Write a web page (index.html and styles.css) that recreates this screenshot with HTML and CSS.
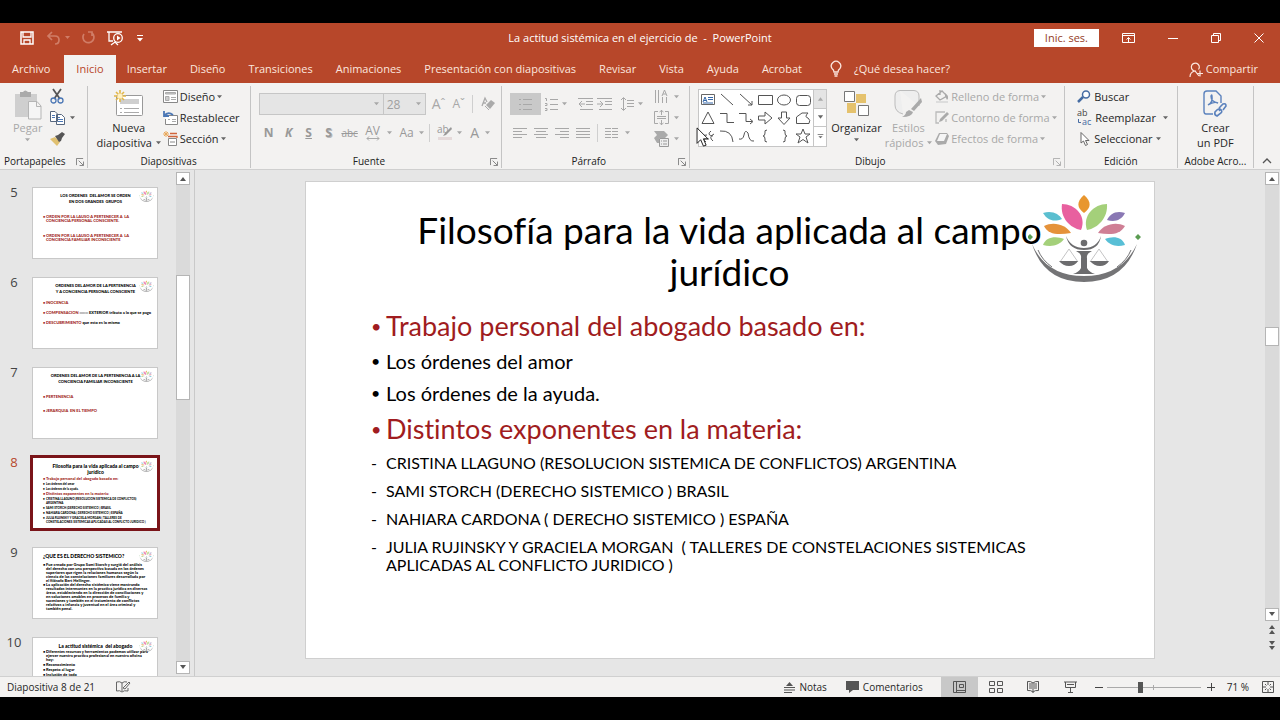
FILE: index.html
```html
<!DOCTYPE html>
<html lang="es">
<head>
<meta charset="utf-8">
<title>La actitud sistémica en el ejercicio de - PowerPoint</title>
<link rel="stylesheet" href="styles.css">
</head>
<body>
<svg class="defs" aria-hidden="true">
  <symbol id="logo" viewBox="0 0 114 92">
    <path fill="#e8962e" d="M56 3C64 10 63 16 56 21C49 16 48 10 56 3Z"/>
    <path fill="#e8609f" d="M34 12C47 12 59 24 53 38C42 36 32 26 34 12Z"/>
    <path fill="#a4d07a" d="M79 12C66 12 54 24 59 38C70 36 80 26 79 12Z"/>
    <path fill="#5bbfd0" d="M15 21C24 18 31 22 34 27C26 30 20 29 15 21Z"/>
    <path fill="#8a78b4" d="M97 21C88 18 82 22 79 28C86 30 93 29 97 21Z"/>
    <path fill="#e5923a" d="M16 34C26 29 38 33 43 41C31 43 20 43 16 34Z"/>
    <path fill="#cf7f95" d="M97 34C87 29 75 33 70 41C82 43 92 43 97 34Z"/>
    <path fill="#a4d07a" d="M15 53C18 44 29 44 36 47C31 54 23 55 15 53Z"/>
    <path fill="#58bfd6" d="M97 53C94 44 84 44 77 47C82 54 89 55 97 53Z"/>
    <circle fill="#6c6c6e" cx="56" cy="51" r="3.3"/>
    <path fill="#6c6c6e" d="M38 44Q43 56 56 56T73 44Q71 58 56 58Q41 58 38 44Z"/>
    <path fill="#6c6c6e" d="M48 59H64Q58 62 59 66V76Q61 80 67 82H45Q51 80 53 76V66Q54 62 48 59Z"/>
    <path fill="none" stroke="#c4c4c5" d="M32 70L41 57L50 70M62 70L71 57L80 70"/>
    <path fill="#6c6c6e" d="M31 69H50Q47 74 41 74T31 69ZM62 69H81Q78 74 72 74T62 69Z"/>
    <path fill="#747476" d="M4 52Q18 84 56 84T109 52Q96 90 56 90T4 52Z"/>
    <path fill="none" stroke="#747476" d="M10 58Q14 68 24 75M103 58Q99 68 89 75"/>
    <path fill="#5a9c52" d="M2 42L5 45L2 48L-1 45ZM110 42L113 45L110 48L107 45Z"/>
  </symbol>
  <symbol id="caret" viewBox="0 0 6 4"><path fill="currentColor" d="M0 0H6L3 3.5Z"/></symbol>
  <symbol id="launch" viewBox="0 0 9 9"><path fill="none" stroke="currentColor" d="M.5 8V.5H8M3 3L8 8M8.500 4V8.500H4"/></symbol>
  <symbol id="up" viewBox="0 0 8 5"><path fill="currentColor" d="M1 5L4 1L7 5Z"/></symbol>
  <symbol id="down" viewBox="0 0 8 5"><path fill="currentColor" d="M1 0L4 4L7 0Z"/></symbol>
</svg>
<div class="screen">
<header class="titlebar">
  <div class="quick">
    <button aria-label="Guardar"><svg width="14" height="14" viewBox="0 0 14 14"><path fill="none" stroke="#fff" stroke-width="1.500" d="M1 1H13V13H1Z"/><path fill="none" stroke="#fff" stroke-width="1.300" d="M3 1V6H11V1M4 13V9H10V13"/></svg></button>
    <button class="faded" aria-label="Deshacer"><svg width="23" height="14" viewBox="0 0 23 14"><path fill="none" stroke="currentColor" stroke-width="1.700" d="M5 1L1 5L5 9M1 5H8Q12 5 12 9T8 13"/><path fill="currentColor" d="M18 5H23L20.500 8Z"/></svg></button>
    <button class="faded" aria-label="Repetir"><svg width="14" height="14" viewBox="0 0 14 14"><path fill="none" stroke="currentColor" stroke-width="1.700" d="M8 1H12V5M12 2A5.500 5.500 0 1 1 4 3"/></svg></button>
    <button aria-label="Presentación desde el principio"><svg width="17" height="15" viewBox="0 0 17 15"><path fill="none" stroke="#fff" stroke-width="1.300" d="M0 1H15M2 1V10H6M4 14L8 11L11 14"/><circle cx="11" cy="7" r="4.300" fill="#b7472a" stroke="#fff" stroke-width="1.300"/><path fill="#fff" d="M10 4.500V9.500L13.500 7Z"/></svg></button>
    <button aria-label="Personalizar"><svg width="6" height="7" viewBox="0 0 6 7"><path fill="#fff" d="M0 0H6V1H0ZM0 3H6L3 6.500Z"/></svg></button>
  </div>
  <h1>La actitud sistémica en el ejercicio de&nbsp; -&nbsp; PowerPoint</h1>
  <div class="window">
    <button class="signin">Inic. ses.</button>
    <button aria-label="Opciones de la cinta"><svg width="13" height="10" viewBox="0 0 13 10"><path fill="none" stroke="#fff" d="M.5.5H12.500V9.500H.5ZM.5 2.500H12.500M6.500 9V4.500M4.500 6.500L6.500 4.500L8.500 6.500"/></svg></button>
    <button aria-label="Minimizar"><svg width="10" height="10" viewBox="0 0 10 10"><path stroke="#fff" d="M0 5.500H10"/></svg></button>
    <button aria-label="Restaurar"><svg width="10" height="10" viewBox="0 0 10 10"><path fill="none" stroke="#fff" d="M.5 2.500H7.500V9.500H.5ZM2.500 2V.5H9.500V7.500H8"/></svg></button>
    <button aria-label="Cerrar"><svg width="10" height="10" viewBox="0 0 10 10"><path stroke="#fff" d="M.5.5L9.500 9.500M9.500.5L.5 9.500"/></svg></button>
  </div>
</header>
<nav class="tabs">
  <button>Archivo</button><button class="active">Inicio</button><button>Insertar</button><button>Diseño</button><button>Transiciones</button><button>Animaciones</button><button>Presentación con diapositivas</button><button>Revisar</button><button>Vista</button><button>Ayuda</button><button>Acrobat</button>
  <button class="tell"><svg width="12" height="16" viewBox="0 0 12 16"><path fill="none" stroke="currentColor" stroke-width="1.300" d="M4 11Q4 9 2 7.500A4.700 4.700 0 1 1 10 7.500Q8 9 8 11ZM4 13H8M4.500 15H7.500"/></svg>¿Qué desea hacer?</button>
  <button class="share"><svg width="14" height="15" viewBox="0 0 14 15"><path fill="none" stroke="currentColor" stroke-width="1.200" d="M7 9A4 4 0 1 1 9.500 7.500M1 15Q1 10 6 9L10 14M8 11.500H14M11 8.500V14.500"/></svg>Compartir</button>
</nav>

<section class="ribbon">
  <div class="group g-clip">
    <div class="body">
      <button class="big off paste"><svg width="28" height="30" viewBox="0 0 28 30"><path fill="#cfcfcf" d="M1 4H23V27H1Z"/><path fill="#aaa" d="M6 2H9Q11-1 14 2H17V7H6Z"/><path fill="#f5f5f5" stroke="#b5b5b5" d="M14.500 11.500H23L27 16V29H14.500ZM22.500 12V16.500H27"/></svg>Pegar<svg class="caret"><use href="#caret"/></svg></button>
      <div class="stack">
        <button aria-label="Cortar"><svg width="14" height="15" viewBox="0 0 14 15"><path stroke="#555" stroke-width="1.800" d="M3 0L10 10M11 0L4 10"/><g fill="none" stroke="#4b77b5" stroke-width="1.300"><circle cx="3.500" cy="11.500" r="2.500"/><circle cx="10.500" cy="11.500" r="2.500"/></g></svg></button>
        <button aria-label="Copiar"><svg width="15" height="14" viewBox="0 0 15 14"><path fill="#fff" stroke="#56677f" d="M.5.5H5L7.500 3V10.500H.5ZM6.500 3.500H11.500L14.500 6.500V13.500H6.500Z"/><path stroke="#4b77b5" d="M2 4.500H5M2 6.500H5M8 8.500H13M8 10.500H13M8 6.500H10"/></svg><svg class="caret"><use href="#caret"/></svg></button>
        <button aria-label="Copiar formato"><svg width="15" height="14" viewBox="0 0 15 14"><path fill="#e0c070" d="M0 7L5 5L10 10L7 14Z"/><path fill="#555" d="M5 4L8 3L12 0L15 2L12 6L11 9L9 10Z"/></svg></button>
      </div>
    </div>
    <footer>Portapapeles<svg class="launch"><use href="#launch"/></svg></footer>
  </div>
  <div class="group g-slides">
    <div class="body">
      <button class="big"><svg width="29" height="27" viewBox="0 0 29 27"><rect x="2.500" y="5.500" width="26" height="20" rx="1" fill="#fff" stroke="#999"/><path fill="#cfcfcf" d="M6 9H25V14H6Z"/><path stroke="#aaa" d="M6 18.500H8M10 18.500H25M6 22.500H8M10 22.500H25"/><path stroke="#e2b748" stroke-width="1.600" d="M6 0V12M0 6H12M2 2L10 10M10 2L2 10"/><circle cx="6" cy="6" r="2.500" fill="#fff1c4"/></svg>Nueva<span>diapositiva <svg class="caret"><use href="#caret"/></svg></span></button>
      <div class="stack">
        <button><svg width="15" height="14" viewBox="0 0 15 14"><path fill="#fff" stroke="#888" d="M.5.5H14.500V12.500H.5Z"/><path fill="#ccc" stroke="#aaa" d="M2.500 2.500H12.500V4H2.500ZM2.500 6.500H6V10.500H2.500Z"/><path stroke="#aaa" d="M8 7.500H13M8 9.500H13"/></svg>Diseño<svg class="caret"><use href="#caret"/></svg></button>
        <button><svg width="15" height="14" viewBox="0 0 15 14"><path fill="#fff" stroke="#888" d="M3 4.500H14.500V13.500H2.500V8"/><path fill="none" stroke="#4b77b5" stroke-width="1.800" d="M1 0V5H6M1 5Q5 0 10 4"/><path stroke="#aaa" d="M5 8.500H7M9 8.500H13M9 10.500H13"/></svg>Restablecer</button>
        <button><svg width="15" height="15" viewBox="0 0 15 15"><path stroke="#e9a85a" d="M3 0V6M0 3H6M1 1L5 5M5 1L1 5"/><path fill="none" stroke="#d0643b" stroke-width="1.300" d="M7 2.500H14M5 5.500H14V7"/><path fill="#fff" stroke="#888" d="M5.500 7.500H13.500V14.500H5.500ZM7 11H12"/></svg>Sección<svg class="caret"><use href="#caret"/></svg></button>
      </div>
    </div>
    <footer>Diapositivas</footer>
  </div>
  <div class="group g-font off">
    <div class="body rows">
      <div class="line">
        <label class="combo wide"><select aria-label="Fuente" disabled><option></option></select><svg class="caret"><use href="#caret"/></svg></label><label class="combo"><select aria-label="Tamaño de fuente" disabled><option>28</option></select><svg class="caret"><use href="#caret"/></svg></label>
        <button class="tool grow">A<sup>ˆ</sup></button><button class="tool shrink">A<sup>ˇ</sup></button><i class="bar"></i>
        <button class="tool" aria-label="Borrar formato"><svg width="14" height="14" viewBox="0 0 14 14"><path fill="none" stroke="#aaa" stroke-width="1.300" d="M1 9L4 1L6 5M2 6H5"/><path fill="#aaa" d="M5 8L10 3L14 6L9 12Z"/><path stroke="#aaa" fill="none" d="M4 9L8 13"/></svg></button>
      </div>
      <div class="line font-tools">
        <button class="tool"><b>N</b></button><button class="tool"><b><em>K</em></b></button><button class="tool"><b><u>S</u></b></button><button class="tool shadow"><b>S</b></button><button class="tool abc"><s>abc</s></button>
        <button class="tool av"><span>AV</span><svg width="14" height="5" viewBox="0 0 14 5"><path fill="none" stroke="#aaa" d="M1 2.500H13M3 .5L1 2.500L3 4.500M11 .5L13 2.500L11 4.500"/></svg></button><svg class="caret"><use href="#caret"/></svg>
        <button class="tool">Aa</button><svg class="caret"><use href="#caret"/></svg><i class="bar"></i>
        <button class="tool" aria-label="Resaltado"><svg width="16" height="16" viewBox="0 0 16 16"><text x="0" y="8" font-size="10" fill="#999">ab</text><path fill="#999" d="M14 2L15 4L9 10L6 11L8 8Z"/><path fill="#e5dada" d="M1 12H15V15H1Z"/></svg></button><svg class="caret"><use href="#caret"/></svg>
        <button class="tool big-a">A</button><svg class="caret"><use href="#caret"/></svg>
      </div>
    </div>
    <footer>Fuente<svg class="launch"><use href="#launch"/></svg></footer>
  </div>
  <div class="group g-para off">
    <div class="body">
      <div class="rows">
        <div class="line">
          <button class="tool pressed" aria-label="Viñetas"><svg width="13" height="13" viewBox="0 0 13 13"><path stroke="currentColor" d="M0 1.500H2M4 1.500H13M0 6.500H2M4 6.500H13M0 11.500H2M4 11.500H13"/></svg></button>
          <button class="tool" aria-label="Numeración"><svg width="13" height="14" viewBox="0 0 13 14"><path fill="none" stroke="currentColor" d="M0 1.500H1.500V4M0 6.500H2V8.500H0M0 11.500H2V13.500H0M5 2.500H13M5 7.500H13M5 12.500H13"/></svg></button><svg class="caret"><use href="#caret"/></svg>
          <button class="tool gap-left" aria-label="Reducir sangría"><svg width="15" height="12" viewBox="0 0 15 12"><path fill="none" stroke="currentColor" d="M0 .5H15M8 3.500H15M8 6.500H15M2 11.500H15M1 6H7M4 3L1 6L4 9"/></svg></button>
          <button class="tool" aria-label="Aumentar sangría"><svg width="15" height="12" viewBox="0 0 15 12"><path fill="none" stroke="currentColor" d="M0 .5H15M8 3.500H15M8 6.500H15M2 11.500H15M0 6H6M3 3L6 6L3 9"/></svg></button>
          <button class="tool gap-left" aria-label="Interlineado"><svg width="13" height="14" viewBox="0 0 13 14"><path fill="none" stroke="currentColor" d="M2.500 1V13M0 3L2.500 .5L5 3M0 11L2.500 13.500L5 11M6 3.500H13M6 6.500H13M6 9.500H13"/></svg></button><svg class="caret"><use href="#caret"/></svg>
        </div>
        <div class="line align">
          <button class="tool" aria-label="Alinear a la izquierda"><svg width="14" height="10" viewBox="0 0 14 10"><path stroke="currentColor" d="M0 .5H14M0 3.500H9M0 6.500H14M0 9.500H9"/></svg></button>
          <button class="tool" aria-label="Centrar"><svg width="14" height="10" viewBox="0 0 14 10"><path stroke="currentColor" d="M0 .5H14M2 3.500H12M0 6.500H14M2 9.500H12"/></svg></button>
          <button class="tool" aria-label="Alinear a la derecha"><svg width="14" height="10" viewBox="0 0 14 10"><path stroke="currentColor" d="M0 .5H14M5 3.500H14M0 6.500H14M5 9.500H14"/></svg></button>
          <button class="tool" aria-label="Justificar"><svg width="14" height="10" viewBox="0 0 14 10"><path stroke="currentColor" d="M0 .5H14M0 3.500H14M0 6.500H14M0 9.500H14"/></svg></button><i class="bar"></i>
          <button class="tool" aria-label="Columnas"><svg width="13" height="10" viewBox="0 0 13 10"><path stroke="currentColor" d="M0 .5H6M7 .5H13M0 3.500H6M7 3.500H13M0 6.500H6M7 6.500H13M0 9.500H6M7 9.500H13"/></svg></button><svg class="caret"><use href="#caret"/></svg>
        </div>
      </div>
      <div class="stack">
        <button aria-label="Dirección del texto"><svg width="15" height="15" viewBox="0 0 15 15"><path fill="none" stroke="currentColor" d="M1.500 1V14M4.500 1V14M8.500 8V14M12.500 8V14M8 7L10.500 1L13 7M9 5H12"/></svg><svg class="caret"><use href="#caret"/></svg></button>
        <button aria-label="Alinear texto"><svg width="15" height="15" viewBox="0 0 15 15"><path fill="none" stroke="currentColor" d="M4 1.500H.5V13.500H4M11 1.500H14.500V13.500H11M3 6.500H12M3 8.500H12M7.500 0V5M5.500 2L7.500 .5L9.500 2M7.500 10V15M5.500 13L7.500 14.500L9.500 13"/></svg><svg class="caret"><use href="#caret"/></svg></button>
        <button aria-label="SmartArt"><svg width="15" height="16" viewBox="0 0 15 16"><path fill="#aaa" d="M0 0H10L14 4L11 7H5V12H3L0 7L3 4Z"/><path fill="#eee" stroke="#999" d="M5.500 7.500H14.500V15.500H5.500ZM7 10H8M9 10H13M7 13H8M9 13H13"/></svg><svg class="caret"><use href="#caret"/></svg></button>
      </div>
    </div>
    <footer>Párrafo<svg class="launch"><use href="#launch"/></svg></footer>
  </div>
  <div class="group g-draw">
    <div class="body">
      <div class="gallery">
        <div class="shapes">
          <svg viewBox="0 0 18 18"><path fill="#fff" stroke="#666" d="M2.500 3.500H15.500V13.500H2.500Z"/><path fill="none" stroke="#3467a8" d="M4 11L6 6L8 11M5 9.500H7M9 6.500H14M9 8.500H14M4 12H14"/></svg>
          <svg viewBox="0 0 18 18"><path d="M3 3L15 14"/></svg>
          <svg viewBox="0 0 18 18"><path d="M3 3L15 14M15 10V14H11"/></svg>
          <svg viewBox="0 0 18 18"><path d="M2.500 4.500H16.500V13.500H2.500Z"/></svg>
          <svg viewBox="0 0 18 18"><ellipse cx="9" cy="9" rx="6.500" ry="5"/></svg>
          <svg viewBox="0 0 18 18"><rect x="2.500" y="4.500" width="14" height="10" rx="3"/></svg>
          <svg viewBox="0 0 18 18"><path d="M9 3L15 14.500H3Z"/></svg>
          <svg viewBox="0 0 18 18"><path d="M2 4.500H9V13.500H16"/></svg>
          <svg viewBox="0 0 18 18"><path d="M2 4.500H9V12.500H15M13 10L16 12.500L13 15"/></svg>
          <svg viewBox="0 0 18 18"><path d="M2.500 7H9V3L16 9L9 15V11H2.500Z"/></svg>
          <svg viewBox="0 0 18 18"><path d="M6.500 3H11.500V9H15L9 15.500L3 9H6.500Z"/></svg>
          <svg viewBox="0 0 18 18"><path d="M2.500 14.500V8L8 4H14Q10 8 14 9Q17 11 15 14.500Z"/></svg>
          <svg viewBox="0 0 18 18"><path d="M4 13Q1 8 8 8M7 15Q2 11 10 12M12 4Q7 8 14 9M15 7Q9 10 14 14"/></svg>
          <svg viewBox="0 0 18 18"><path d="M2 4Q14 3 15 15"/></svg>
          <svg viewBox="0 0 18 18"><path d="M2 12Q6 13 7 8Q8 2 11 6Q12 15 17 14"/></svg>
          <svg viewBox="0 0 18 18"><path d="M11 3Q8 3 9 6Q9 9 7 9Q9 9 9 12Q8 15 11 15"/></svg>
          <svg viewBox="0 0 18 18"><path d="M8 3Q11 3 10 6Q10 9 12 9Q10 9 10 12Q11 15 8 15"/></svg>
          <svg viewBox="0 0 18 18"><path d="M9 2L11 7H16L12 10L14 16L9 12.500L4 16L6 10L2 7H7Z"/></svg>
        </div>
        <div class="scroll3"><button class="dim" aria-label="Arriba"><svg><use href="#up"/></svg></button><button aria-label="Abajo"><svg><use href="#down"/></svg></button><button aria-label="Más formas"><svg viewBox="0 0 8 7"><path fill="currentColor" d="M0 0H8V1H0ZM1 3H7L4 6Z"/></svg></button></div>
        <svg class="cursor" viewBox="0 0 14 22"><path fill="#fff" stroke="#111" d="M1 1V18L5 14L8 21L11 20L8 13H13Z"/></svg>
      </div>
      <button class="big"><svg width="27" height="27" viewBox="0 0 27 27"><path fill="#e5c26d" d="M13 4H23V13H13V23H4V13H13Z"/><path fill="#fff" stroke="#777" d="M1.500 1.500H11.500V11.500H1.500ZM15.500 15.500H25.500V25.500H15.500Z"/></svg>Organizar<svg class="caret"><use href="#caret"/></svg></button>
      <button class="big off"><svg width="28" height="27" viewBox="0 0 28 27"><path fill="#eee" stroke="#bbb" d="M6 .5H20Q25 1 25 6V16M9 24Q1 22 1 15V6Q1 1 6 .5"/><path fill="#aaa" d="M27 8L28 12L20 21L17 19ZM15 20L19 22Q18 27 8 27Q12 25 12 22Z"/></svg>Estilos<span>rápidos <svg class="caret"><use href="#caret"/></svg></span></button>
      <div class="stack off">
        <button><svg width="14" height="15" viewBox="0 0 14 15"><path fill="none" stroke="#aaa" stroke-width="1.300" d="M1 7L7 2L12 7L5 11ZM5 6V1"/><path fill="#aaa" d="M10 4Q15 8 12 11L10 7Z"/><path fill="#ddd" d="M1 12H13V14H1Z"/></svg>Relleno de forma<svg class="caret"><use href="#caret"/></svg></button>
        <button><svg width="14" height="14" viewBox="0 0 14 14"><path fill="none" stroke="#bbb" stroke-width="1.300" d="M10 1H1V12H4M11 8V11"/><path fill="#aaa" d="M12 1L14 3L7 10L4 11L5 8Z"/></svg>Contorno de forma<svg class="caret"><use href="#caret"/></svg></button>
        <button><svg width="14" height="14" viewBox="0 0 14 14"><path fill="#aaa" d="M4 1H12L14 4L11 12L3 13L0 9Z"/><path fill="#f5f5f5" d="M5 2H12L9 9H2Z"/></svg>Efectos de forma<svg class="caret"><use href="#caret"/></svg></button>
      </div>
    </div>
    <footer>Dibujo<svg class="launch off"><use href="#launch"/></svg></footer>
  </div>
  <div class="group g-edit">
    <div class="body"><div class="stack">
      <button><svg width="14" height="13" viewBox="0 0 14 13"><circle cx="9" cy="4.500" r="3.500" fill="#fff" stroke="#466ca3" stroke-width="1.500"/><path stroke="#466ca3" stroke-width="2.500" d="M6 7L1 12"/></svg>Buscar</button>
      <button><svg width="15" height="16" viewBox="0 0 15 16"><text x="0" y="6" font-size="9" fill="#444">ab</text><text x="5" y="15" font-size="9" fill="#466ca3">ac</text><path fill="none" stroke="#466ca3" d="M1.500 9V12.500H4"/></svg>Reemplazar<svg class="caret far"><use href="#caret"/></svg></button>
      <button><svg width="14" height="14" viewBox="0 0 14 14"><path fill="#fff" stroke="#666" d="M4 .5V11L6.500 9L8.500 13.500L10.500 12.500L8.500 8.500H12Z"/></svg>Seleccionar<svg class="caret"><use href="#caret"/></svg></button>
    </div></div>
    <footer>Edición</footer>
  </div>
  <div class="group g-pdf">
    <div class="body"><button class="big"><svg width="24" height="27" viewBox="0 0 24 27"><path fill="none" stroke="#5b82bd" stroke-width="1.400" d="M10 24H3Q1 24 1 21V4Q1 1 4 1H13L18 6V13M5 15Q10 13 9 6Q9 4 8 6Q8 12 15 13Q11 11 5 15"/><path fill="none" stroke="#5b82bd" stroke-width="1.600" d="M15 19L12 22Q11 25 14 26L18 23Q20 21 17 19M17 21Q15 19 17 17L20 14Q23 13 23 16L20 20"/></svg>Crear<span>un PDF</span></button></div>
    <footer>Adobe Acro...</footer>
  </div>
  <button class="collapse" aria-label="Contraer la cinta"><svg width="10" height="6" viewBox="0 0 10 6"><path fill="none" stroke="#555" stroke-width="1.300" d="M1 5L5 1L9 5"/></svg></button>
</section>

<main class="work">
  <aside class="pane">
    <ol class="thumbs">
      <li><span>5</span><div class="thumb t5"><h3>LOS ORDENES&nbsp; DEL AMOR SE ORDEN<br>EN DOS GRANDES&nbsp; GRUPOS</h3><ul><li>ORDEN POR LA LAUSO A PERTENECER A&nbsp; LA CONCIENCIA PERSONAL CONSCIENTE.</li><li>ORDEN POR LA LAUSO A PERTENECER A&nbsp; LA CONCIENCIA FAMILIAR INCONSCIENTE</li></ul><svg><use href="#logo"/></svg></div></li>
      <li><span>6</span><div class="thumb t6"><h3>ORDENES DEL AMOR DE LA PERTENENCIA<br>Y A CONCIENCIA PERSONAL CONSCIENTE</h3><ul><li>INOCENCIA</li><li>COMPENSACION <b>═══ EXTERIOR tributo a lo que se pago</b></li><li>DESCUBRIMIENTO <b>que esto es lo mismo</b></li></ul><svg><use href="#logo"/></svg></div></li>
      <li><span>7</span><div class="thumb t7"><h3>ORDENES DEL AMOR DE LA PERTENENCIA A LA<br>CONCIENCIA FAMILIAR INCONSCIENTE</h3><ul><li>PERTENENCIA</li><li>JERARQUIA&nbsp; EN EL TIEMPO</li></ul><svg><use href="#logo"/></svg></div></li>
      <li class="current"><span>8</span><div class="thumb t8"><h3>Filosofía para la vida aplicada al campo<br>jurídico</h3><ul><li>Trabajo personal del abogado basado en:</li><li class="k">Los órdenes del amor</li><li class="k">Los órdenes de la ayuda.</li><li>Distintos exponentes en la materia:</li><li class="k">CRISTINA LLAGUNO (RESOLUCION SISTEMICA DE CONFLICTOS) ARGENTINA</li><li class="k">SAMI STORCH (DERECHO SISTEMICO ) BRASIL</li><li class="k">NAHIARA CARDONA ( DERECHO SISTEMICO ) ESPAÑA</li><li class="k">JULIA RUJINSKY Y GRACIELA MORGAN ( TALLERES DE CONSTELACIONES SISTEMICAS APLICADAS AL CONFLICTO JURIDICO )</li></ul><svg><use href="#logo"/></svg></div></li>
      <li><span>9</span><div class="thumb t9"><h3>¿QUE ES EL DERECHO SISTEMICO?</h3><ul><li class="k">Fue creado por Grupo Sami Storch y surgió del análisis del derecho con una perspectiva basada en los órdenes superiores que rigen la relaciones humanas según la ciencia de las constelaciones familiares desarrollada por el filósofo Bert Hellinger.</li><li class="k">La aplicación del derecho sistémico viene mostrando resultados interesantes en la practica jurídica en diversas áreas, estableciendo en la dirección de conciliaciones y en soluciones amables en procesos de familia y sucesiones y también en el tratamiento de conflictos relativos a infancia y juventud en el área criminal y también penal.</li></ul><svg><use href="#logo"/></svg></div></li>
      <li><span>10</span><div class="thumb t10"><h3>La actitud sistémica&nbsp; del abogado</h3><ul><li class="k">Diferentes recursos y herramientas podemos utilizar para ejercer nuestra practica profesional en nuestra oficina hoy:</li><li class="k">Reconocimiento</li><li class="k">Respeto al lugar</li><li class="k">Inclusión de todo</li></ul><svg><use href="#logo"/></svg></div></li>
    </ol>
    <div class="scrollbar left"><button aria-label="Subir"><svg><use href="#up"/></svg></button><div class="track"><div class="handle"></div></div><button aria-label="Bajar"><svg><use href="#down"/></svg></button></div>
  </aside>
  <section class="editor">
    <article class="slide">
      <h2>Filosofía para la vida aplicada al campo jurídico</h2>
      <ul>
        <li class="red">Trabajo personal del abogado basado en:</li>
        <li class="mid">Los órdenes del amor</li>
        <li class="mid">Los órdenes de la ayuda.</li>
        <li class="red">Distintos exponentes en la materia:</li>
        <li class="dash">CRISTINA LLAGUNO (RESOLUCION SISTEMICA DE CONFLICTOS) ARGENTINA</li>
        <li class="dash">SAMI STORCH (DERECHO SISTEMICO ) BRASIL</li>
        <li class="dash">NAHIARA CARDONA ( DERECHO SISTEMICO ) ESPAÑA</li>
        <li class="dash">JULIA RUJINSKY Y GRACIELA MORGAN&nbsp; ( TALLERES DE CONSTELACIONES SISTEMICAS APLICADAS AL CONFLICTO JURIDICO )</li>
      </ul>
      <svg class="brand"><use href="#logo"/></svg>
    </article>
  </section>
  <div class="scrollbar right"><button aria-label="Subir"><svg><use href="#up"/></svg></button><div class="track"><div class="handle"></div></div><button aria-label="Bajar"><svg><use href="#down"/></svg></button>
    <button class="jump" aria-label="Diapositiva anterior"><svg viewBox="0 0 8 9"><path fill="currentColor" d="M1 4L4 0L7 4ZM1 9L4 5L7 9Z"/></svg></button><button class="jump" aria-label="Diapositiva siguiente"><svg viewBox="0 0 8 9"><path fill="currentColor" d="M1 0L4 4L7 0ZM1 5L4 9L7 5Z"/></svg></button></div>
</main>

<footer class="status">
  <span>Diapositiva 8 de 21</span>
  <button class="spell" aria-label="Ortografía"><svg width="15" height="12" viewBox="0 0 15 12"><path fill="none" stroke="#666" d="M6 10V2Q4 0 .5 1V10Q4 9 6 11Q8 9 12 10V7M6 2Q8 0 11 1M7 7L13 1L14 2L9 8Z"/></svg></button>
  <div class="status-right">
    <button><svg width="11" height="11" viewBox="0 0 11 11"><path fill="#555" d="M2 4L5.500 0L9 4ZM0 5H11V6H0ZM0 7.500H11V8.500H0ZM0 10H8V11H0Z"/></svg>Notas</button>
    <button class="comments"><svg width="13" height="12" viewBox="0 0 13 12"><path fill="#555" d="M0 0H13V9H7L3 12V9H0Z"/></svg>Comentarios</button>
    <button class="view on" aria-label="Normal"><svg width="13" height="12" viewBox="0 0 13 12"><path fill="none" stroke="#555" d="M.5.5H12.500V11.500H.5ZM3.500.5V11.500M6.500 3.500H10.500V6.500H6.500ZM3.500 9.500H12.500"/></svg></button>
    <button class="view" aria-label="Clasificador"><svg width="14" height="12" viewBox="0 0 14 12"><path fill="none" stroke="#555" d="M.5.5H5.500V4.500H.5ZM8.500.5H13.500V4.500H8.500ZM.5 7.500H5.500V11.500H.5ZM8.500 7.500H13.500V11.500H8.500Z"/></svg></button>
    <button class="view" aria-label="Lectura"><svg width="12" height="12" viewBox="0 0 12 12"><path fill="none" stroke="#555" d="M6 2V12M6 2Q4 0 .5 .5V9.500Q4 9 6 11Q8 9 11.500 9.500V.5Q8 0 6 2M2 3H5M2 5H5M2 7H5M7 3H10M7 5H10M7 7H10"/></svg></button>
    <button class="view" aria-label="Presentación"><svg width="13" height="12" viewBox="0 0 13 12"><path fill="none" stroke="#555" d="M0 1H13M1.500 1V6.500H11.500V1M6.500 7V11M4 11.500H9M3 3.500H10"/></svg></button>
    <button class="zoom-btn" aria-label="Alejar"><svg width="8" height="8" viewBox="0 0 8 8"><path stroke="#444" d="M0 4.500H8"/></svg></button>
    <input type="range" min="0" max="100" value="35" aria-label="Zoom">
    <button class="zoom-btn" aria-label="Acercar"><svg width="8" height="8" viewBox="0 0 8 8"><path stroke="#444" d="M0 4.500H8M4.500 0V8"/></svg></button>
    <span class="pct">71 %</span>
    <button class="fit" aria-label="Ajustar"><svg width="12" height="12" viewBox="0 0 12 12"><path fill="none" stroke="#555" d="M.5.5H11.500V11.500H.5ZM6 1V4M6 8V11M1 6H4M8 6H11M3 3L4.500 4.500M9 3L7.500 4.500M3 9L4.500 7.500M9 9L7.500 7.500"/></svg></button>
  </div>
</footer>
</div>
</body>
</html>
```
FILE: styles.css
```css
* { box-sizing: border-box; }
body { margin: 0; background: #000; color: #262626; font: 11px/14px "Open Sans", "Noto Sans", sans-serif; }
button { border: 0; background: none; color: inherit; font: inherit; padding: 0; display: flex; align-items: center; white-space: nowrap; }
svg { flex: none; overflow: visible; }
.defs { position: absolute; width: 0; height: 0; }
h1, h2, h3, ul, ol { margin: 0; padding: 0; font-weight: 400; }
ul, ol { list-style: none; }
.screen { height: 100vh; padding: 23px 0; display: flex; flex-direction: column; }

.titlebar { height: 32px; background: #b7472a; color: #fff; display: grid; grid-template-columns: 1fr auto 1fr; align-items: center; flex: none; padding-bottom: 2px; }
.titlebar h1 { font-size: 11px; }
.quick { display: flex; gap: 13px; padding-left: 20px; align-items: center; }
.quick .faded { color: #d07d67; }
.quick .faded + .faded { margin-left: -3px; }
.window { display: flex; justify-content: flex-end; align-items: center; gap: 33px; padding-right: 16px; }
.window .signin { background: #fff; color: #943b25; height: 18px; padding: 0 11px; margin-right: -10px; }

.tabs { height: 28px; background: #b7472a; color: #fbe6df; display: flex; flex: none; padding-left: 1px; }
.tabs button { padding: 0 12px 0 11px; }
.tabs .active { background: #f3f2f1; color: #b7472a; margin-left: 2px; padding: 0 12px; }
.tabs .tell { gap: 12px; padding-left: 16px; }
.tabs .share { margin-left: auto; gap: 3px; padding-right: 22px; }

.ribbon { height: 87px; flex: none; background: #f3f2f1; border-bottom: 1px solid #cfcfcf; display: flex; }
.group { display: flex; flex-direction: column; position: relative; min-width: 0; border-right: 1px solid #c4c4c4; margin-bottom: 1px; margin-top: 3px; }
.g-clip { flex: 87 1 0; }
.g-slides { flex: 163 1 0; }
.g-font { flex: 252 1 0; }
.g-para { flex: 188 1 0; }
.g-draw { flex: 376 1 0; }
.g-edit { flex: 112 1 0; }
.g-pdf { flex: 76 1 0; }
.body { height: 69px; display: flex; }
.group footer { height: 13px; line-height: 13px; text-align: center; color: #222; position: relative; white-space: nowrap; font-size: 10px; }
.g-draw footer { padding-right: 14px; }
.g-font footer { padding-right: 14px; }
.g-para footer { padding-right: 14px; }
.g-clip footer { text-align: left; padding-left: 4px; }
.launch { position: absolute; right: 3px; top: 3px; width: 8px; height: 8px; color: #777; }
.caret { width: 5px; height: 4px; color: #666; }
.off, .off .caret { color: #a8a8a8; }
.big { flex-direction: column; height: 66px; line-height: 15px; padding-top: 4px; }
.big > svg:first-child { margin-bottom: 3px; }
.paste > svg:first-child { margin-bottom: 0; }
.big .caret:last-child { margin-top: 3px; }
.big span .caret { margin-left: 1px; vertical-align: 2px; }
.stack { display: flex; flex-direction: column; }
.stack button { height: 21px; gap: 3px; }
.g-clip .body { padding-left: 13px; gap: 8px; }
.g-clip .stack button { gap: 5px; }
.g-slides .body { padding-left: 9px; gap: 2px; }
.g-slides .stack button { gap: 2px; }
.rows { display: flex; flex-direction: column; padding-top: 7px; }
.line { display: flex; align-items: center; height: 22px; }
.line + .line { margin-top: 7px; }
.bar { width: 1px; height: 18px; background: #cfcfcf; }
.tool { justify-content: center; position: relative; }
.g-font .body { padding-left: 8px; }
.combo { display: flex; align-items: center; width: 43px; height: 22px; border: 1px solid #c6c6c6; background: #e5e5e5; padding-right: 4px; }
.combo.wide { width: 124px; border-right: 0; }
.combo select { appearance: none; border: 0; background: none; font: 12px "Open Sans", sans-serif; color: #a0a0a0; flex: 1; min-width: 0; padding: 0 3px; opacity: 1; }
.grow { font-size: 14px; margin-left: 3px; width: 20px; }
.shrink { font-size: 12px; width: 20px; margin-right: 3px; }
.tool sup { font-size: 12px; line-height: 6px; }
.line .bar + .tool { margin-left: 8px; }
.font-tools { color: #999; font-size: 12px; }
.font-tools .tool { width: 20px; }
.font-tools .abc { width: 22px; font-size: 10px; }
.font-tools .av { flex-direction: column; width: 24px; line-height: 11px; }
.font-tools .tool + .caret { margin: 0 5px 0 2px; }
.font-tools .bar + .tool { margin-left: 5px; }
.font-tools .big-a { font-size: 14px; width: 16px; }
.shadow { text-shadow: 1px 1px #bbb; }
.g-para .body { padding-left: 8px; justify-content: space-between; padding-right: 10px; }
.g-para .line { gap: 4px; }
.g-para .stack button { gap: 5px; }
.g-para .pressed { background: #c9c9c9; width: 31px; height: 22px; }
.gap-left { margin-left: 7px; }
.g-para .gap-left ~ .gap-left { margin-left: 5px; }
.g-para .align { gap: 7px; padding-left: 3px; }
.g-para .align .bar + .tool { margin-left: 0; }
.g-draw .body { padding-left: 8px; gap: 3px; }
.gallery { display: flex; position: relative; height: 58px; margin-top: 3px; border: 1px solid #c6c6c6; background: #fff; margin-right: 1px; }
.shapes { display: grid; grid-template-columns: repeat(6, 19px); grid-template-rows: repeat(3, 18px); align-content: center; }
.shapes svg { width: 18px; height: 18px; fill: none; stroke: #555; }
.scroll3 { display: grid; grid-template-rows: repeat(3, 1fr); width: 13px; border-left: 1px solid #c6c6c6; }
.scroll3 button { justify-content: center; border-bottom: 1px solid #c6c6c6; color: #666; }
.scroll3 button:last-child { border-bottom: 0; }
.scroll3 .dim { background: #e4e4e4; color: #aaa; }
.scroll3 svg { width: 7px; height: 5px; }
.cursor { position: absolute; left: -3px; top: 37px; width: 13px; height: 20px; }
.g-draw .stack button { gap: 2px; }
.g-edit .body { padding-left: 12px; }
.caret.far { margin-left: 4px; }
.g-pdf .body { justify-content: center; }
.collapse { flex: 26 1 0; justify-content: center; align-items: flex-end; padding-bottom: 5px; }

.work { flex: 1; min-height: 0; display: flex; background: #e6e6e6; }
.pane { width: 195px; flex: none; display: flex; justify-content: space-between; border-right: 1px solid #c9c9c9; padding-right: 4px; }
.thumbs { overflow: hidden; display: flex; flex-direction: column; gap: 14px; padding: 15px 0 0 6px; flex: 1; }
.thumbs > li { display: flex; gap: 8px; }
.thumbs > li > span { width: 16px; font-size: 13px; line-height: 14px; text-align: center; color: #444; }
.thumb { width: 130px; height: 76px; flex: none; border: 3px solid transparent; position: relative; background: #fff padding-box; outline: 1px solid #c8c8c8; outline-offset: -3px; padding: 5px 9px 0 10px; font: 900 4px/4px Lato, sans-serif; color: #000; overflow: hidden; }
.thumbs .current .thumb { border-color: #7a1419; outline: 0; }
.thumbs > .current > span { color: #b7472a; }
.thumb h3 { font-weight: 900; text-align: center; line-height: 6px; font-size: 4px; margin-bottom: 6px; white-space: nowrap; }
.thumb ul { color: #a01c20; font-weight: 900; }
.thumb li { padding-left: 3px; text-indent: -3px; margin-bottom: 6px; }
.thumb li::before { content: "•"; display: inline-block; width: 3px; text-indent: 0; }
.thumb li b, .thumb .k { color: #000; }
.thumb svg { position: absolute; right: 3px; top: 2px; width: 15px; height: 12px; opacity: 0.7; }
.t5 li { margin-bottom: 11px; }
.t6 li { white-space: nowrap; }
.t7 li { margin-bottom: 10px; }
.t5 ul, .t7 ul { padding-top: 4px; }
.t8 h3, .t10 h3 { font-size: 5px; }
.t8 h3 { margin-bottom: 2px; }
.t8 li { margin-bottom: 1px; }
.t8 .k { font-size: 3px; }
.t9 h3 { font-size: 5px; text-align: left; margin-bottom: 4px; }
.thumb.t9 li { margin: 0; }
.t10 h3, .t10 li { margin-bottom: 1px; }

.scrollbar { width: 14px; display: flex; flex-direction: column; padding-top: 2px; color: #555; flex: none; }
.scrollbar button { height: 13px; background: #fff; border: 1px solid #b5b5b5; justify-content: center; flex: none; }
.scrollbar button svg { width: 8px; height: 5px; }
.scrollbar .track { flex: 1; background: #dadada; display: flex; flex-direction: column; }
.handle { background: #fff; border: 1px solid #b5b5b5; }
.left { padding-bottom: 2px; }
.left .handle { margin-top: 90px; height: 125px; }
.right .handle { margin-top: 142px; height: 19px; }
.right { padding-bottom: 23px; margin-right: 1px; }
.scrollbar .jump { background: none; border: 0; height: 16px; }
.scrollbar .jump svg { height: 9px; }

.editor { flex: 1; min-width: 0; padding-top: 11px; }
.slide { width: calc(100% - 220px); aspect-ratio: 16 / 9; margin: 0 auto; background: #fff; border: 1px solid #cfcfcf; position: relative; padding: 27px 66px 0 65px; font-family: Lato, "Open Sans", sans-serif; font-variant-ligatures: none; color: #000; }
.slide h2 { font-size: 37px; line-height: 42px; text-align: center; padding: 0 40px; margin-bottom: 15px; white-space: normal; }
.slide li { display: flex; }
.slide li::before { content: "•"; width: 15px; flex: none; }
.slide .red { font-size: 27px; line-height: 36px; color: #a01c20; }
.slide .red::before { font-size: 18px; }
.slide .mid { font-size: 20px; line-height: 32px; }
.slide .mid::before { font-size: 16px; }
.slide .red + .mid { margin-top: 1px; }
.slide .dash { font-size: 16px; line-height: 18px; margin-bottom: 10px; }
.slide .mid + .red { margin: 2px 0 7px; }
.slide .dash::before { content: "-"; }
.brand { position: absolute; right: 12px; top: 10px; width: 114px; height: 92px; }

.status { height: 21px; flex: none; background: #f3f2f1; border-top: 1px solid #d0d0d0; display: flex; align-items: center; padding-left: 7px; font-size: 10px; }
.spell { margin-left: 21px; }
.status-right { margin-left: auto; display: flex; align-items: center; padding-right: 6px; height: 100%; }
.status-right button { gap: 4px; height: 100%; }
.comments { margin: 0 18px 0 19px; }
.view { width: 37px; justify-content: center; }
.view.on { background: #c8c8c8; }
.zoom-btn { margin-left: 6px; }
input[type="range"] { appearance: none; width: 94px; height: 12px; margin: 0 0 0 4px; background: linear-gradient(#aaa, #aaa) center / 100% 1px no-repeat, linear-gradient(#aaa, #aaa) center / 1px 5px no-repeat; }
input[type="range"]::-webkit-slider-thumb { appearance: none; width: 5px; height: 11px; background: #555; }
.pct { margin-left: 12px; }
.fit { margin-left: 13px; }
```
